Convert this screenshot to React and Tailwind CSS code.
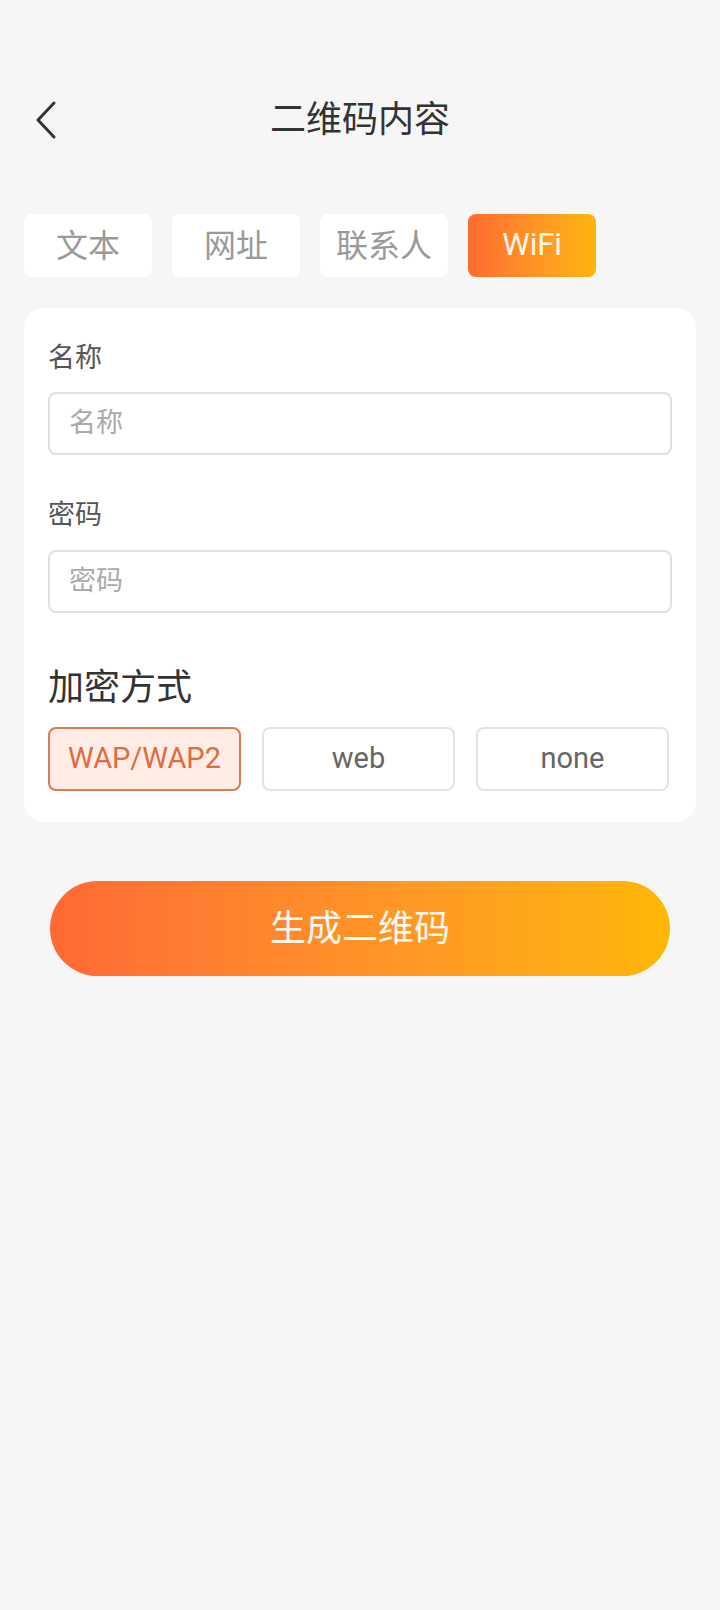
import React from "react";

const font = { fontFamily: 'Roboto, "Noto Sans CJK SC", sans-serif' };

export default function App() {
  const tabs = ["文本", "网址", "联系人", "WiFi"];
  const modes = ["WAP/WAP2", "web", "none"];
  return (
    <div
      className="w-[720px] min-h-[1610px] bg-[#f6f6f6] flex flex-col"
      style={font}
    >
      {/* header */}
      <div className="mt-[72px] h-[96px] relative flex items-center justify-center">
        <div className="absolute left-[34px] top-0 h-full flex items-center">
          <svg width="24" height="40" viewBox="0 0 24 40" fill="none">
            <polyline
              points="20,3 4,20 20,37"
              stroke="#333"
              strokeWidth="3"
              strokeLinecap="round"
              strokeLinejoin="round"
            />
          </svg>
        </div>
        <div className="text-[36px] text-[#333] leading-none">二维码内容</div>
      </div>

      {/* tabs */}
      <div className="mt-[46px] px-[24px] flex gap-[20px]">
        {tabs.map((t, i) =>
          i === 3 ? (
            <div
              key={t}
              className="w-[128px] h-[63px] rounded-[8px] flex items-center justify-center text-[31px] text-[#fff8e6] bg-gradient-to-r from-[#ff6a30] to-[#ffb60a]"
            >
              {t}
            </div>
          ) : (
            <div
              key={t}
              className="w-[128px] h-[63px] rounded-[8px] bg-white flex items-center justify-center text-[32px] text-[#9a9a9a]"
            >
              {t}
            </div>
          )
        )}
      </div>

      {/* card */}
      <div className="mt-[31px] mx-[24px] bg-white rounded-[20px] px-[24px] pt-[32px] pb-[31px] flex flex-col">
        <div className="text-[27px] leading-[36px] text-[#555]">名称</div>
        <div className="mt-[16px] h-[63px] border-2 border-[#e0e0e0] rounded-[8px] flex items-center px-[19px] text-[27px] text-[#aaa]">
          名称
        </div>
        <div className="mt-[42px] text-[27px] leading-[36px] text-[#555]">密码</div>
        <div className="mt-[17px] h-[63px] border-2 border-[#e0e0e0] rounded-[8px] flex items-center px-[19px] text-[27px] text-[#aaa]">
          密码
        </div>
        <div className="mt-[53px] text-[36px] leading-[44px] text-[#333]">加密方式</div>
        <div className="mt-[17px] flex gap-[21px]">
          {modes.map((m, i) =>
            i === 0 ? (
              <div
                key={m}
                className="w-[193px] h-[64px] rounded-[8px] border-2 border-[#dd7a52] bg-[#ffece4] flex items-center justify-center text-[29px] text-[#dd6d3f]"
              >
                {m}
              </div>
            ) : (
              <div
                key={m}
                className="w-[193px] h-[64px] rounded-[8px] border-2 border-[#e3e3e3] bg-white flex items-center justify-center text-[29px] text-[#666]"
              >
                {m}
              </div>
            )
          )}
        </div>
      </div>

      {/* generate button */}
      <div className="mt-[59px] mx-[50px] h-[95px] rounded-full bg-gradient-to-r from-[#ff6935] to-[#ffb703] flex items-center justify-center text-[36px] text-[#fffaf0]">
        生成二维码
      </div>
    </div>
  );
}
